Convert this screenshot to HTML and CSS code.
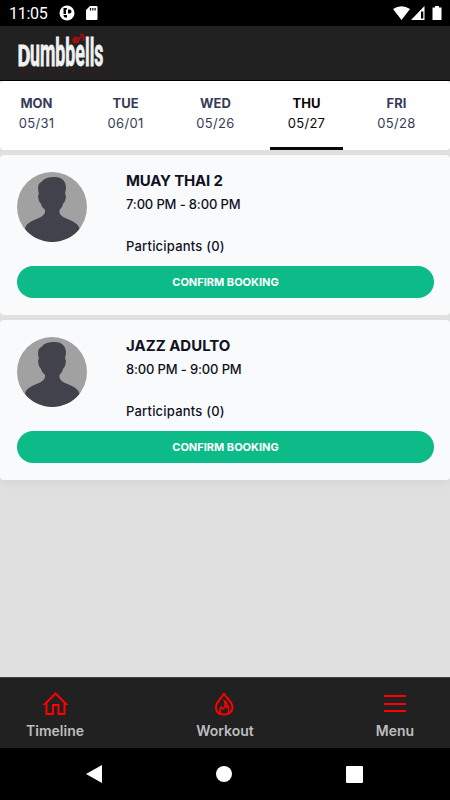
FILE: index.html
```html
<!DOCTYPE html>
<html lang="en">
<head>
  <meta charset="utf-8">
  <title>Dumbbells</title>
  <link rel="stylesheet" href="styles.css">
</head>
<body>
  <svg class="defs" width="0" height="0">
    <symbol id="avatar" viewBox="0 0 70 70">
      <circle cx="35" cy="35" r="35" fill="#a1a1a1"/>
      <path fill="#42424c" d="M22 22C20.500 17 20.500 11 24.500 10C27 6 32 5 38 5C45 5 49 9 49 16L48 22Q49.500 23 48.500 27Q48 30 46.500 31Q45.500 35 42.500 38V40C43 45 49 46 55 49Q61.500 52 62.500 57A35 35 0 0 1 8 57Q8.500 52 15 49C21 46 27 45 28 40V38Q24.500 35 23.500 31Q22 30 21.500 27Q20.500 23 22 22Z"/>
    </symbol>
  </svg>

  <div class="status">
    <span class="clock">11:05</span>
    <svg class="status-app" width="16" height="16" viewBox="0 0 16 16">
      <circle cx="8" cy="8" r="7.500" fill="#fff"/>
      <path d="M4.500 3H8V4.500H7V9H4.500ZM9 4.500H10.500A2 2 0 0 1 10.500 8.500H9ZM4.500 10H8V12.500Q4.500 13 4.500 10Z" fill="#000"/>
    </svg>
    <svg class="status-sd" width="12" height="14" viewBox="0 0 12 14">
      <path d="M4 0H10.500Q11.500 0 11.500 1V13Q11.500 14 10.500 14H1Q0 14 0 13V4Z" fill="#fff"/>
      <path d="M4.500 2V4.500M6.800 2V4.500M9.100 2V4.500" stroke="#000" stroke-width="1.200"/>
    </svg>
    <svg class="status-right" width="49" height="15" viewBox="0 0 49 15">
      <path d="M0 3Q8.500 -2.500 17 3L8.500 14Z" fill="#fff"/>
      <path d="M31.500 0V14H18Z" fill="#fff"/>
      <path d="M28 5.500H30.300V12.500H28Z" fill="#000"/>
      <path d="M39.500 1.500H42V0H46V1.500H48.500V14H39.500Z" fill="#fff"/>
    </svg>
  </div>

  <div class="header">
    <svg class="logo" width="90" height="42" viewBox="0 0 90 42">
      <text class="logo-text" x="0.500" y="34" font-size="30" textLength="13" lengthAdjust="spacingAndGlyphs">D</text>
      <text class="logo-text" x="13" y="34" font-size="38" textLength="73.500" lengthAdjust="spacingAndGlyphs">umbbells</text>
      <g fill="none" stroke="#a00d12" stroke-width="2">
        <circle cx="59" cy="8" r="3.500" fill="#a00d12" stroke="none"/>
        <path d="M60 7.500L65 5M63 2.500Q69 3 66 9"/>
      </g>
      <text class="logo-sub" x="15" y="40.500" font-size="3" textLength="57">ACADEMIA</text>
      <path d="M2 39H13M73 39H85" stroke="#4c171b" stroke-width="1"/>
    </svg>
  </div>

  <div class="days">
    <div class="day"><b>MON</b><span>05/31</span></div>
    <div class="day"><b>TUE</b><span>06/01</span></div>
    <div class="day"><b>WED</b><span>05/26</span></div>
    <div class="day active"><b>THU</b><span>05/27</span></div>
    <div class="day"><b>FRI</b><span>05/28</span></div>
  </div>

  <div class="card">
    <div class="info">
      <svg class="avatar"><use href="#avatar"/></svg>
      <div class="details">
        <div class="title tight">MUAY THAI 2</div>
        <div class="time">7:00 PM - 8:00 PM</div>
        <div class="people">Participants (0)</div>
      </div>
    </div>
    <div class="button">CONFIRM BOOKING</div>
  </div>

  <div class="card last">
    <div class="info">
      <svg class="avatar"><use href="#avatar"/></svg>
      <div class="details">
        <div class="title">JAZZ ADULTO</div>
        <div class="time">8:00 PM - 9:00 PM</div>
        <div class="people">Participants (0)</div>
      </div>
    </div>
    <div class="button">CONFIRM BOOKING</div>
  </div>

  <div class="tabs">
    <div class="tab">
      <svg width="26" height="26" viewBox="0 0 26 26">
        <path d="M3 13L13.500 2.500L24 13H22.500V23H16.500V14H11V23H4.500V13Z"/>
      </svg>
      <span>Timeline</span>
    </div>
    <div class="tab">
      <svg width="26" height="26" viewBox="0 0 26 26">
        <path d="M12 2C12.500 6 20.500 10 20.500 16.500C20.500 21 17 23.500 12 23.500S4 21 4 16.500C4 10 11.500 6 12 2Z"/>
        <path d="M9 23Q7 18.500 9 16Q9.500 18 11 18Q14.500 15 12.500 10Q15.500 11.500 15 16L16 15Q18 19 15.500 23" stroke-width="1.600"/>
      </svg>
      <span>Workout</span>
    </div>
    <div class="tab">
      <svg width="26" height="26" viewBox="0 0 26 26">
        <path d="M2 5H24M2 13H24M2 20H24"/>
      </svg>
      <span>Menu</span>
    </div>
  </div>

  <div class="nav">
    <svg width="16" height="18" viewBox="0 0 16 18"><path d="M0 9L16 0V18Z"/></svg>
    <svg width="16" height="16" viewBox="0 0 16 16"><circle cx="8" cy="8" r="8"/></svg>
    <svg width="17" height="17" viewBox="0 0 17 17"><rect width="17" height="17" rx="1"/></svg>
  </div>
</body>
</html>
```
FILE: styles.css
```css
* {
  box-sizing: border-box;
}
body {
  margin: 0;
  height: 800px;
  display: flex;
  flex-direction: column;
  overflow: hidden;
  background: #e0e0e0;
  color: #12121f;
  font-family: Inter, Roboto, sans-serif;
}
svg {
  display: block;
  flex: none;
}
.defs {
  height: 0;
}
.status {
  height: 26px;
  padding: 0 8px 0 9px;
  display: flex;
  align-items: center;
  background: #000;
  color: #fff;
}
.clock {
  width: 50px;
  padding-top: 2px;
  font: 16px/26px Roboto, sans-serif;
  letter-spacing: -0.3px;
}
.status-sd {
  margin-left: 11px;
}
.status-right {
  margin-left: auto;
}
.header {
  height: 55px;
  padding: 6px 17px;
  background: #212121;
  border-bottom: 1px solid #000;
}
.logo {
  overflow: visible;
}
.logo-text {
  fill: #f1f1f1;
  stroke: #f1f1f1;
  stroke-width: 0.8;
  font-family: Roboto, sans-serif;
  font-weight: 700;
}
.logo-sub {
  fill: #641317;
  font-family: Roboto, sans-serif;
}
.days {
  height: 69px;
  margin-bottom: 5px;
  display: flex;
  gap: 17px;
  background: #fff;
  border-radius: 4px;
}
.day {
  width: 73px;
  padding-top: 12px;
  text-align: center;
  color: #363b58;
  font-size: 13px;
  line-height: 20px;
  border-bottom: 3px solid transparent;
}
.day:nth-child(2), .day:nth-child(3) {
  padding-right: 2px;
}
.day b, .day span {
  display: block;
}
.day span {
  letter-spacing: 0.3px;
}
.day.active {
  color: #080808;
  border-color: #080808;
}
.card {
  height: 160px;
  margin-bottom: 5px;
  padding: 17px 16px 0 17px;
  background: #f8fafc;
  border-radius: 4px;
}
.card.last {
  box-shadow: 0 4px 10px rgba(0, 0, 0, 0.04);
}
.info {
  height: 94px;
  display: flex;
}
.avatar {
  width: 70px;
  height: 70px;
  margin-right: 39px;
}
.title {
  font-size: 15px;
  line-height: 18px;
  font-weight: 700;
}
.tight {
  letter-spacing: -0.2px;
}
.time {
  margin-top: 5px;
  font-size: 13px;
  line-height: 18px;
  font-weight: 500;
  letter-spacing: -0.15px;
}
.people {
  margin-top: 24px;
  font-size: 13px;
  line-height: 18px;
  font-weight: 500;
  letter-spacing: 0.2px;
}
.button {
  height: 32px;
  border-radius: 16px;
  background: #0cbb87;
  color: #fff;
  text-align: center;
  font-size: 11px;
  line-height: 32px;
  font-weight: 700;
}
.tabs {
  height: 71px;
  margin-top: auto;
  padding-top: 13px;
  display: flex;
  justify-content: space-between;
  background: #212121;
  color: #bdbdbd;
  border-top: 1px solid #444;
}
.tab {
  width: 110px;
  display: flex;
  flex-direction: column;
  align-items: center;
  font-size: 14px;
  line-height: 27px;
  font-weight: 600;
}
.tab svg {
  fill: none;
  stroke: #f00;
  stroke-width: 2;
}
.nav {
  height: 52px;
  padding: 0 87px 0 86px;
  display: flex;
  align-items: center;
  justify-content: space-between;
  background: #000;
  fill: #fff;
}
```
